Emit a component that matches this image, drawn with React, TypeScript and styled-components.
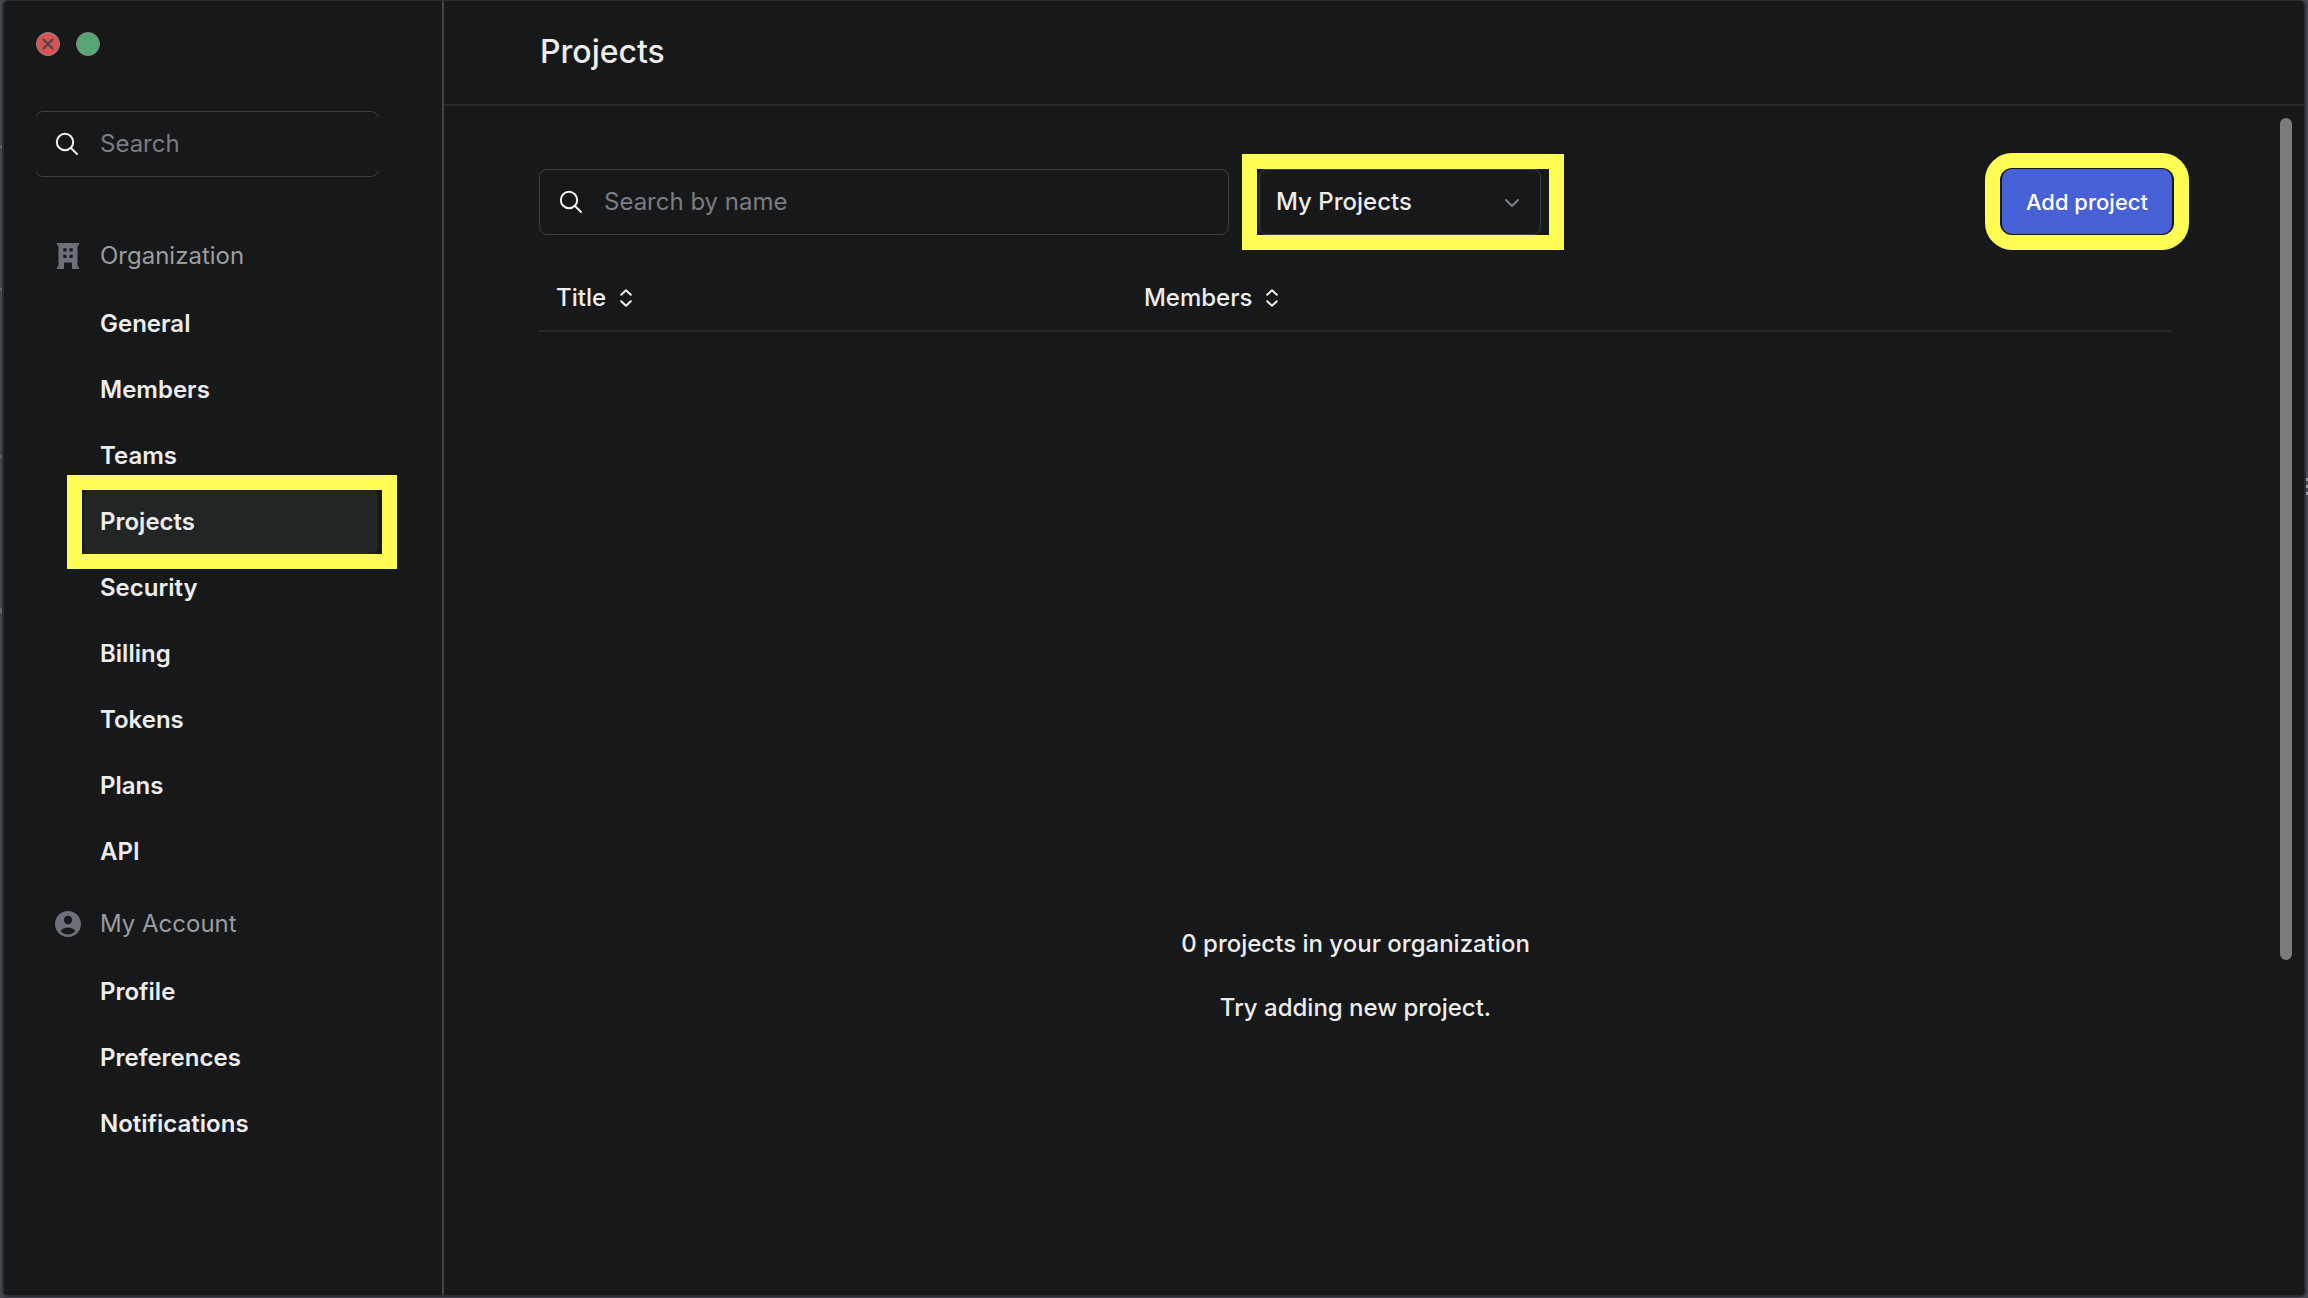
import React from "react";
import styled, { createGlobalStyle, css } from "styled-components";

const color = {
  panel: "#17181a",
  edge: "#2a2c2e",
  divider: "#414244",
  line: "#28292b",
  field: "#3c3e40",
  text: "#ededee",
  muted: "#9a9da0",
  placeholder: "#797d81",
  icon: "#6d7078",
  active: "#212526",
  primary: "#4860d5",
  highlight: "#fffc54",
};

const GlobalStyle = createGlobalStyle`
  *, *::before, *::after { box-sizing: border-box; }
  body {
    margin: 0;
    background: ${color.panel};
    color: ${color.text};
    font-family: Inter, "Liberation Sans", sans-serif;
    font-size: 24px;
    line-height: 32px;
  }
  button, input, select { font: inherit; color: inherit; }
`;

const Desktop = styled.div`
  display: grid;
  grid-template-columns: 2px minmax(0, 1fr) 2px;
  min-height: 100vh;
  padding-bottom: 1px;
  background: #42464f;
`;

const Gutter = styled.div<{ $marks: number[]; $tone: string }>`
  background: ${({ $marks, $tone }) =>
    $marks.map((y) => `linear-gradient(${$tone}, ${$tone}) 0 ${y}px / 2px 3px no-repeat`).join(", ")};
`;

const Window = styled.div`
  display: grid;
  grid-template-columns: 440px minmax(0, 1fr);
  min-height: 0;
  border: 2px solid ${color.edge};
  border-top-width: 1px;
  border-radius: 6px;
  background: ${color.panel};
  overflow: hidden;
`;

const Sidebar = styled.aside`
  display: flex;
  flex-direction: column;
  padding: 31px 63px 0 31px;
  border-right: 2px solid ${color.divider};
`;

const WindowControls = styled.div`
  display: flex;
  gap: 16px;
  margin: 0 0 55px 1px;
`;

const ControlDot = styled.button<{ $fill: string }>`
  display: grid;
  place-items: center;
  width: 24px;
  height: 24px;
  padding: 0;
  border: 1px solid #85868c;
  border-radius: 50%;
  background: ${({ $fill }) => $fill};
`;

const Field = styled.label<{ $subtle?: boolean }>`
  display: flex;
  align-items: center;
  gap: 21px;
  height: 66px;
  padding: 0 19px;
  border: 1px solid ${color.field};
  border-radius: 8px;
  ${({ $subtle }) =>
    $subtle &&
    css`
      clip-path: inset(0 1px);
    `}
`;

const FieldInput = styled.input`
  flex: 1;
  min-width: 0;
  padding: 0;
  border: 0;
  outline: 0;
  background: transparent;
  &::placeholder {
    color: ${color.placeholder};
    opacity: 1;
  }
`;

const Nav = styled.nav`
  display: flex;
  flex-direction: column;
  gap: 7px;
  margin-top: 47px;
`;

const NavHeading = styled.h2`
  display: grid;
  grid-template-columns: 26px 1fr;
  align-items: center;
  column-gap: 19px;
  height: 64px;
  margin: 0;
  padding-left: 20px;
  color: ${color.muted};
  font-size: 24px;
  font-weight: 400;
`;

const NavList = styled.ul`
  margin: 3px 1px 0 49px;
  padding: 0;
  list-style: none;
`;

const NavLink = styled.a<{ $active?: boolean }>`
  position: relative;
  display: flex;
  align-items: center;
  height: 66px;
  padding: 0 16px;
  border-radius: 8px;
  color: ${color.text};
  font-weight: 600;
  text-decoration: none;
  ${({ $active }) =>
    $active &&
    css`
      background: ${color.active};
      &::after {
        content: "";
        position: absolute;
        inset: -14px -19px -14px -17px;
        border: 15px solid ${color.highlight};
      }
    `}
`;

const Main = styled.main`
  display: flex;
  flex-direction: column;
  min-width: 0;
`;

const Header = styled.header`
  display: flex;
  align-items: center;
  height: 105px;
  padding: 0 96px 2px;
  border-bottom: 2px solid ${color.line};
`;

const Title = styled.h1`
  margin: 0;
  font-size: 32px;
  line-height: 40px;
  font-weight: 500;
`;

const Body = styled.div`
  display: flex;
  flex: 1;
  gap: 108px;
  padding: 0 12px 0 95px;
`;

const Content = styled.section`
  flex: 1;
  min-width: 0;
  padding-top: 63px;
`;

const ScrollTrack = styled.div`
  width: 12px;
  padding-top: 12px;
`;

const ScrollThumb = styled.div`
  height: 842px;
  max-height: 100%;
  border-radius: 6px;
  background: #7b7b7b;
`;

const Toolbar = styled.div`
  display: grid;
  grid-template-columns: 690px 282px auto;
  column-gap: 30px;
`;

const Highlight = styled.div<{ $inset: string; $radius?: number }>`
  position: relative;
  &::after {
    content: "";
    position: absolute;
    inset: ${({ $inset }) => $inset};
    border: 15px solid ${color.highlight};
    border-radius: ${({ $radius = 0 }) => $radius}px;
    pointer-events: none;
  }
`;

const SelectBox = styled.div`
  display: grid;
  align-items: center;
  & > * {
    grid-area: 1 / 1;
  }
  & > svg {
    justify-self: end;
    margin: 2px 21px 0 0;
    pointer-events: none;
  }
`;

const Select = styled.select`
  width: 100%;
  height: 66px;
  padding: 0 16px;
  border: 1px solid ${color.field};
  border-radius: 8px;
  background: transparent;
  font-weight: 500;
  appearance: none;
`;

const ToolbarEnd = styled.div`
  display: flex;
  align-items: flex-start;
  justify-content: flex-end;
`;

const PrimaryButton = styled.button`
  display: block;
  height: 65px;
  padding: 0 24px;
  border: 0;
  border-radius: 10px;
  background: ${color.primary};
  color: #fff;
  font-size: 22px;
  font-weight: 500;
`;

const Table = styled.table`
  width: 100%;
  margin-top: 29px;
  border-collapse: collapse;
  table-layout: fixed;
`;

const HeadCell = styled.th<{ $width: string }>`
  width: ${({ $width }) => $width};
  height: 67px;
  padding: 2px 17px 0;
  border-bottom: 2px solid ${color.line};
  font-weight: 500;
  text-align: left;
`;

const SortButton = styled.button`
  display: flex;
  align-items: center;
  gap: 14px;
  padding: 0;
  border: 0;
  background: none;
`;

const EmptyState = styled.div`
  display: flex;
  flex-direction: column;
  align-items: center;
  gap: 32px;
  padding-top: 596px;
  font-weight: 500;
  & > p {
    margin: 0;
  }
`;

const SearchIcon = () => (
  <svg width="24" height="24" viewBox="0 0 24 24" fill="none" stroke="#f4f4f4" strokeWidth="2" aria-hidden="true">
    <circle cx="10" cy="10" r="8.2" />
    <path d="M16 16l6 6" strokeLinecap="round" />
  </svg>
);

const BuildingIcon = () => (
  <svg width="26" height="26" viewBox="0 0 26 26" fill={color.icon} aria-hidden="true">
    <path
      fillRule="evenodd"
      d="M2 0h22v2.500h-1.500V23L24 24v2h-7v-5.500a1 1 0 0 0-1-1h-6a1 1 0 0 0-1 1V26H2v-2l1.500-1V2.500H2zM8.300 5.300v3.200h3.200V5.300zm6.200 0v3.200h3.200V5.300zM8.300 11.800V15h3.200v-3.200zm6.200 0V15h3.200v-3.200z"
    />
  </svg>
);

const AccountIcon = () => (
  <svg width="26" height="26" viewBox="2 2 20 20" fill={color.icon} aria-hidden="true">
    <path d="M12 2C6.480 2 2 6.480 2 12s4.480 10 10 10 10-4.480 10-10S17.520 2 12 2zm0 3.700a3.200 3.200 0 1 1 0 6.400 3.200 3.200 0 0 1 0-6.400zM12 20c-2.300 0-4.400-.95-5.700-2.700C7.300 15.500 9.500 14.600 12 14.600s4.700.9 5.700 2.700C16.400 19.050 14.300 20 12 20z" />
  </svg>
);

const SortIcon = () => (
  <svg width="12" height="18" viewBox="0 0 12 18" fill="none" stroke={color.text} strokeWidth="2" strokeLinecap="round" strokeLinejoin="round" aria-hidden="true">
    <path d="M1.200 5.800L6 1.200l4.800 4.600M1.200 12.200L6 16.800l4.800-4.600" />
  </svg>
);

const ChevronIcon = () => (
  <svg width="16" height="10" viewBox="0 0 16 10" fill="none" stroke="#7d8186" strokeWidth="2" strokeLinecap="round" strokeLinejoin="round" aria-hidden="true">
    <path d="M2 2l6 6 6-6" />
  </svg>
);

const CloseIcon = () => (
  <svg width="12" height="12" viewBox="0 0 12 12" stroke="#45484b" strokeWidth="2" strokeLinecap="round" aria-hidden="true">
    <path d="M1.500 1.500l9 9M10.500 1.500l-9 9" />
  </svg>
);

const sections = [
  {
    title: "Organization",
    Icon: BuildingIcon,
    items: ["General", "Members", "Teams", "Projects", "Security", "Billing", "Tokens", "Plans", "API"],
  },
  { title: "My Account", Icon: AccountIcon, items: ["Profile", "Preferences", "Notifications"] },
];

const columns = [
  { name: "Title", width: "36%" },
  { name: "Members", width: "64%" },
];

export default function App() {
  return (
    <>
      <GlobalStyle />
      <Desktop>
        <Gutter $marks={[145, 288, 455, 608, 610]} $tone="#5d626c" />
        <Window>
          <Sidebar>
            <WindowControls>
              <ControlDot $fill="#d75452" aria-label="Close">
                <CloseIcon />
              </ControlDot>
              <ControlDot $fill="#57a573" aria-label="Maximize" />
            </WindowControls>
            <Field $subtle>
              <SearchIcon />
              <FieldInput type="search" placeholder="Search" aria-label="Search" />
            </Field>
            <Nav>
              {sections.map(({ title, Icon, items }) => (
                <div key={title}>
                  <NavHeading>
                    <Icon />
                    {title}
                  </NavHeading>
                  <NavList>
                    {items.map((item) => (
                      <li key={item}>
                        <NavLink href="#" $active={item === "Projects"}>
                          {item}
                        </NavLink>
                      </li>
                    ))}
                  </NavList>
                </div>
              ))}
            </Nav>
          </Sidebar>
          <Main>
            <Header>
              <Title>Projects</Title>
            </Header>
            <Body>
              <Content>
                <Toolbar>
                  <Field>
                    <SearchIcon />
                    <FieldInput type="search" placeholder="Search by name" aria-label="Search by name" />
                  </Field>
                  <Highlight $inset="-15px -23px -15px -17px">
                    <SelectBox>
                      <Select aria-label="Project filter">
                        <option>My Projects</option>
                      </Select>
                      <ChevronIcon />
                    </SelectBox>
                  </Highlight>
                  <ToolbarEnd>
                    <Highlight $inset="-16px -17px" $radius={27}>
                      <PrimaryButton>Add project</PrimaryButton>
                    </Highlight>
                  </ToolbarEnd>
                </Toolbar>
                <Table>
                  <thead>
                    <tr>
                      {columns.map(({ name, width }) => (
                        <HeadCell key={name} $width={width} scope="col">
                          <SortButton>
                            {name}
                            <SortIcon />
                          </SortButton>
                        </HeadCell>
                      ))}
                    </tr>
                  </thead>
                </Table>
                <EmptyState>
                  <p>0 projects in your organization</p>
                  <p>Try adding new project.</p>
                </EmptyState>
              </Content>
              <ScrollTrack>
                <ScrollThumb />
              </ScrollTrack>
            </Body>
          </Main>
        </Window>
        <Gutter $marks={[478, 485, 492]} $tone="#9a9c9f" />
      </Desktop>
    </>
  );
}
